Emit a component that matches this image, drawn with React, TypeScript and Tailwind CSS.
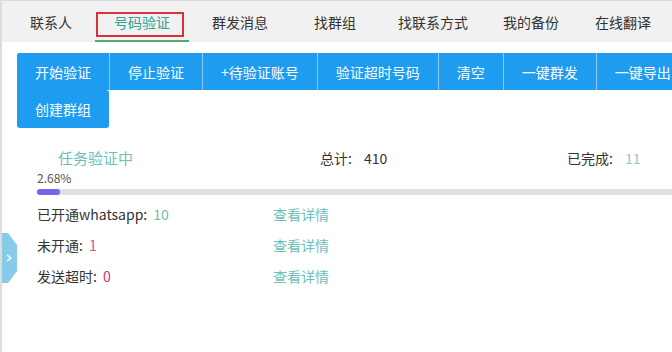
import { ReactNode } from 'react'

const FONT = "font-['Microsoft_YaHei','Noto_Sans_CJK_SC',sans-serif]"

const tabs = [
  { label: '联系人', gap: '' },
  { label: '号码验证', gap: 'ml-[4px]' },
  { label: '群发消息', gap: 'ml-[4px]' },
  { label: '找群组', gap: 'ml-[8px]' },
  { label: '找联系方式', gap: 'ml-[4px]' },
  { label: '我的备份', gap: '-ml-[3px]' },
  { label: '在线翻译', gap: '-ml-[2px]' },
]

const actions = ['开始验证', '停止验证', '+待验证账号', '验证超时号码', '清空', '一键群发', '一键导出', '创建群组']

function Tab({ label, active, gap }: { label: string; active?: boolean; gap: string }) {
  return (
    <div
      className={`relative shrink-0 whitespace-nowrap h-full flex items-center px-[19px] text-[14px] ${gap} ${
        active ? 'text-[#2ea39a]' : 'text-[#333]'
      }`}
    >
      {label}
      {active && <div className="absolute left-0 right-0 bottom-0 h-[2px] bg-[#5aa86f]" />}
      {active && (
        <div className="absolute left-[1px] top-[11px] w-[88px] h-[25px] border-2 border-[#d8313a]" />
      )}
    </div>
  )
}

function Row({ label, value, color }: { label: string; value: string; color: string }) {
  return (
    <div className="flex items-center h-[31px] text-[14px]">
      <div className="w-[236px] text-[#333]">
        {label}
        <span className={`ml-[6px] ${color}`}>{value}</span>
      </div>
      <div className="text-[#6cc0bb]">查看详情</div>
    </div>
  )
}

function Stat({ label, value, color, className }: { label: string; value: ReactNode; color: string; className?: string }) {
  return (
    <div className={`flex text-[14px] text-[#333] ${className ?? ''}`}>
      {label}
      <span className={`ml-[12px] ${color}`}>{value}</span>
    </div>
  )
}

export default function App() {
  return (
    <div className={`${FONT} w-[672px] h-[352px] overflow-hidden bg-white relative border-l-2 border-[#dcdcdc] leading-[20px]`}>
      {/* tabs */}
      <div className="h-[42px] bg-[#f1f1f1] border-t border-[#dadada] flex items-stretch pl-[9px]">
        {tabs.map((t, i) => (
          <Tab key={t.label} label={t.label} gap={t.gap} active={i === 1} />
        ))}
      </div>

      {/* action buttons */}
      <div className="w-[800px] pl-[15px] pt-[11px]">
        <div className="flex flex-wrap w-[680px]">
          {actions.map((a, i) => (
            <button
              key={a}
              className={`h-[37px] whitespace-nowrap px-[18px] text-[14px] text-white bg-[#1e9cf0] ${
                i < 6 ? 'border-r border-[#8ccaf6]' : ''
              } ${i === 7 ? 'h-[38px] rounded-b-[3px] rounded-tr-[3px]' : ''} ${i === 0 ? 'rounded-tl-[2px]' : ''}`}
            >
              {a}
            </button>
          ))}
        </div>
      </div>

      {/* status */}
      <div className="flex items-center h-[20px] mt-[20px] text-[14px]">
        <div className="ml-[56px] w-[262px] text-[15px] text-[#6cbfba]">任务验证中</div>
        <Stat label="总计:" value="410" color="text-[#333]" className="w-[247px]" />
        <Stat label="已完成:" value="11" color="text-[#8cc9b6]" />
      </div>

      <div className="ml-[35px] mt-[3px] text-[12px] leading-[14px] text-[#555]">2.68%</div>
      <div className="ml-[35px] mt-[4px] w-[680px] h-[6px] bg-[#e1e1e1] rounded-l-full">
        <div className="w-[23px] h-full bg-[#7466ee] rounded-full" />
      </div>

      {/* results */}
      <div className="ml-[35px] mt-[3px]">
        <Row label="已开通whatsapp:" value="10" color="text-[#6fbfa5]" />
        <Row label="未开通:" value="1" color="text-[#c15c8d]" />
        <Row label="发送超时:" value="0" color="text-[#e22a6b]" />
      </div>

      {/* side handle */}
      <div className="absolute left-0 top-[233px] w-[15px] h-[50px]">
        <svg width="15" height="50" viewBox="0 0 15 50">
          <polygon points="0,0 6,0 15,12 15,38 6,50 0,50" fill="#86cbe9" />
          <path d="M5 22 L9 25 L5 28" stroke="#fff" strokeWidth="1.3" fill="none" />
        </svg>
      </div>
    </div>
  )
}
